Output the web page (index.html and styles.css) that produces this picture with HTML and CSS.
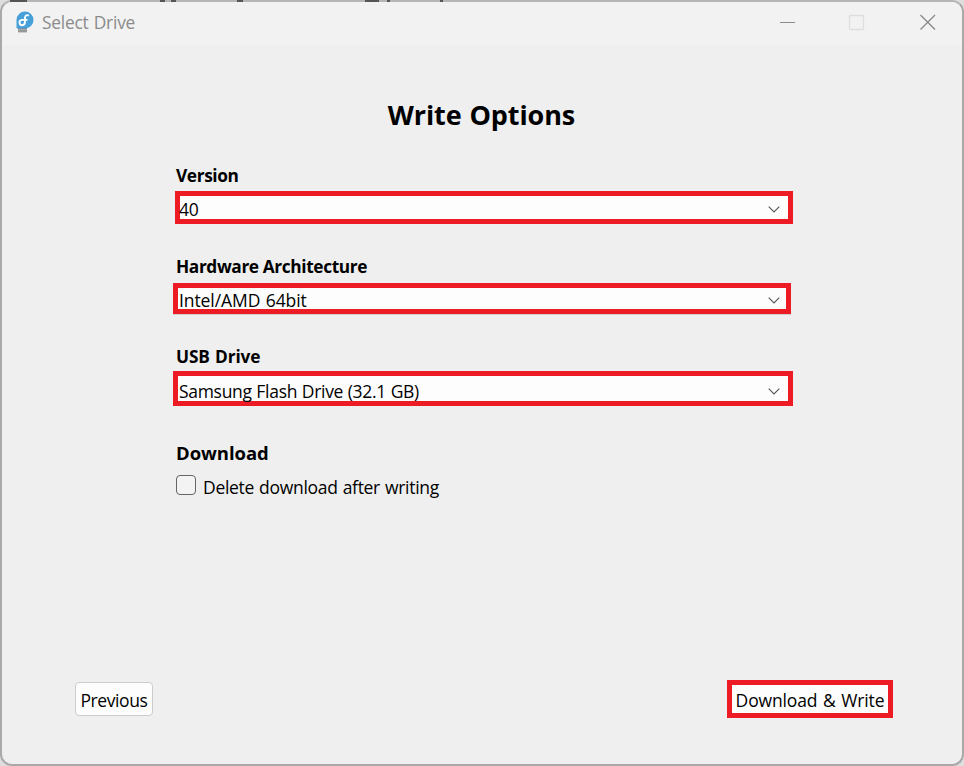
FILE: index.html
```
<!DOCTYPE html>
<html lang="en">
<head>
<meta charset="utf-8">
<title>Select Drive</title>
<link rel="stylesheet" href="styles.css">
</head>
<body>
<div class="window">
  <header class="titlebar">
    <svg class="app-icon" width="18" height="24" viewBox="0 0 18 24">
      <path d="M2 17h9v4.500H2z" fill="#a9a9a9"/>
      <path d="M2 17.500h9M2 20h9" stroke="#858585"/>
      <path d="M.500 17V9a8.500 8.500 0 1 1 8.500 8.500H1z" fill="#46a0da"/>
      <path d="M12.800 4.600C10.800 3.500 9 4.600 9 6.800v4c0 2.300-1 3.400-2.800 3.400S3.500 12.700 3.500 11.500s1-2.600 2.500-2.600h5.500" fill="none" stroke="#fff" stroke-width="1.900"/>
    </svg>
    <span class="title">Select Drive</span>
    <svg class="controls" width="158" height="17" viewBox="0 0 158 17" fill="none">
      <path d="M0 8.500h15" stroke="#8b8b8b"/>
      <rect x="69.500" y="1.500" width="14" height="14" rx="1" stroke="#dedede" stroke-width="1.300"/>
      <path d="M140.500 1l14.500 14.500M155 1l-14.500 14.500" stroke="#888" stroke-width="1.300"/>
    </svg>
  </header>
  <main class="page">
    <h1>Write Options</h1>
    <section class="form">
      <h2 class="label version-label">Version</h2>
      <div class="select version"><span class="t40">40</span><svg class="chevron" width="12" height="7" viewBox="0 0 12 7"><path d="M.7.700L6 6 11.300.700"/></svg></div>
      <h2 class="label hardware-label">Hardware Architecture</h2>
      <div class="select hardware"><span class="tintel">Intel/AMD 64bit</span><svg class="chevron" width="12" height="7" viewBox="0 0 12 7"><path d="M.7.700L6 6 11.300.700"/></svg></div>
      <h2 class="label usb-label">USB Drive</h2>
      <div class="select usb"><span class="tusb">Samsung Flash Drive (32.1 GB)</span><svg class="chevron" width="12" height="7" viewBox="0 0 12 7"><path d="M.7.700L6 6 11.300.700"/></svg></div>
      <h2 class="label download-label">Download</h2>
      <label class="check"><span class="box"></span><span class="tdel">Delete download after writing</span></label>
    </section>
    <footer class="actions">
      <button class="previous"><span>Previous</span></button>
      <button class="write"><span>Download &amp; Write</span></button>
    </footer>
  </main>
</div>
<div class="behind"><i class="b1"></i><i class="b2"></i><i class="b3"></i><i class="b4"></i><i class="b5"></i><i class="b6"></i><i class="b7"></i></div>
</body>
</html>
```
FILE: styles.css
```
* { box-sizing: border-box; }
body {
  margin: 0;
  height: 766px;
  overflow: hidden;
  background: #dedede;
  color: #000;
  font: 17.500px/24px "Open Sans", "Noto Sans", sans-serif;
}
.window {
  height: 766px;
  border: 2px solid #a9a9a9;
  border-top-color: #b5b5b5;
  border-radius: 12px;
  background: #efefef;
  overflow: hidden;
}
.titlebar {
  height: 43px;
  display: flex;
  align-items: flex-start;
  background: #f2f2f2;
  padding: 9px 24px 0 14px;
}
.title { margin: 0 auto 0 8px; color: #8b8b8b; font-size: 17.300px; letter-spacing: -.2px; word-spacing: 1px; }
.controls { margin-top: 3px; }
.page { height: 719px; display: flex; flex-direction: column; }
h1 { margin: 49px 0 0; padding-right: 1px; font-size: 27px; line-height: 42px; font-weight: 700; text-align: center; letter-spacing: -.1px; word-spacing: 1px; }
.form { width: 620px; margin: 28px 0 0 171px; }
.label { margin: 0 0 0 3px; font-size: 17.300px; line-height: 24px; font-weight: 700; letter-spacing: -.38px; }
.select {
  display: flex;
  justify-content: space-between;
  border: 5px solid #ed1c24;
  background: #fdfdfd;
  white-space: nowrap;
}
.select span { line-height: 24px; letter-spacing: -.3px; }
.chevron { flex: none; fill: none; stroke: #555; stroke-width: 1.100; }
.version { width: 618px; height: 33px; margin: 3px 0 0 2px; padding: 1px 8px 0 0; }
.version .t40 { margin-left: -1px; }
.version .chevron { margin-top: 9px; }
.hardware-label { margin-top: 31px; }
.hardware { width: 618px; height: 31px; margin-top: 4px; padding: 0 6px 0 1px; box-shadow: 0 1px #d0d0d0; }
.hardware .tintel { letter-spacing: -.08px; word-spacing: 1px; }
.hardware .chevron { margin-top: 9px; }
.usb-label { margin-top: 31px; letter-spacing: -.15px; word-spacing: 1px; }
.usb { height: 35px; margin-top: 2px; padding: 3px 8px 0 1px; }
.usb .tusb { word-spacing: .4px; }
.usb .chevron { margin-top: 9px; }
.download-label { margin-top: 35px; font-size: 18.500px; letter-spacing: -.05px; }
.check { display: flex; margin: 10px 0 0 3px; gap: 7px; }
.box { width: 20px; height: 20px; border: 1px solid #666; border-radius: 4px; background: #f3f3f3; }
.tdel { letter-spacing: -.3px; word-spacing: .8px; }
.actions { display: flex; justify-content: space-between; align-items: center; margin: auto 69px 46px 73px; }
button { padding: 2px 0 0; color: #000; font: inherit; line-height: 24px; letter-spacing: -.4px; white-space: nowrap; background: #fdfdfd; }
.previous { width: 78px; height: 34px; border: 1px solid #ccc; border-radius: 4px; }
.write { width: 166px; height: 38px; border: 5px solid #ed1c24; letter-spacing: -.13px; word-spacing: 1.200px; }
.behind { position: absolute; inset: 0 0 auto; height: 2px; overflow: hidden; }
.behind i { position: absolute; top: 0; height: 2px; background: #555; }
.b1 { left: 10px; width: 17px; }
.b2 { left: 160px; width: 5px; }
.b3 { left: 171px; width: 5px; }
.b4 { left: 237px; width: 6px; }
.b5 { left: 365px; width: 14px; }
.b6 { left: 387px; width: 3px; }
.b7 { left: 440px; width: 3px; }
```
